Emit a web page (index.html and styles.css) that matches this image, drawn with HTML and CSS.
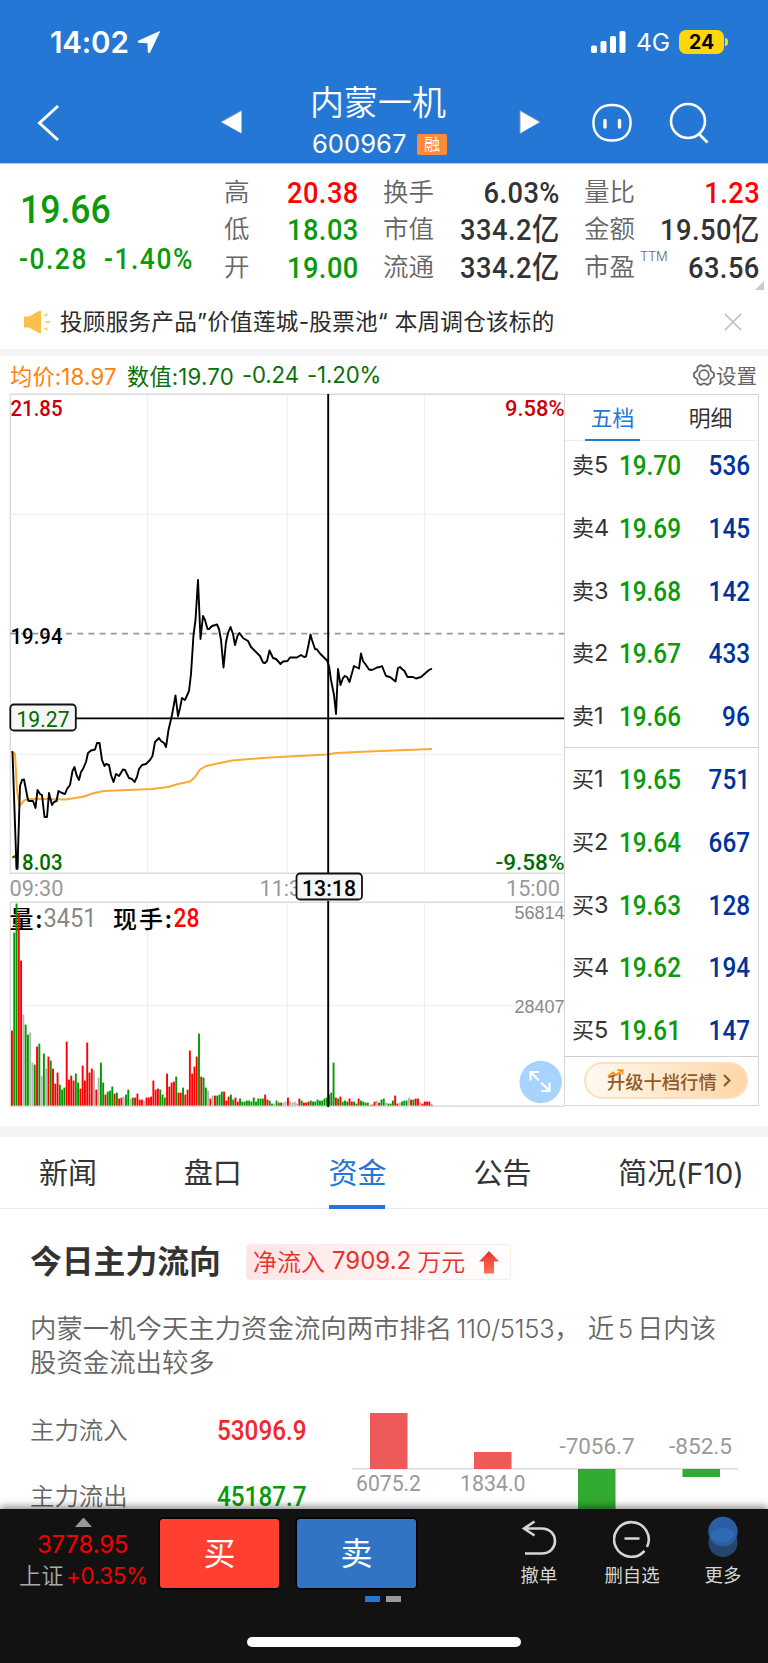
FILE: index.html
```html
<!DOCTYPE html>
<html lang="zh-CN">
<head>
<meta charset="utf-8">
<title>内蒙一机 600967</title>
<link rel="stylesheet" href="styles.css">
</head>
<body>
<div class="app">
  <header class="top">
    <div class="status">
      <div class="clock">14:02
        <svg width="24" height="24" viewBox="0 0 24 24"><path d="M22.3 1.200 1.600 10.400c-1.400.7-1 2.300.5 2.400l8.300.4.4 8.600c.1 1.400 1.800 1.800 2.400.4L22.900 1.900c.2-.5-.1-.9-.6-.7z" fill="#fff"/></svg>
      </div>
      <div class="signals">
        <svg width="35" height="22" viewBox="0 0 35 22" fill="#fff"><rect y="14.500" width="6" height="7.500" rx="1.800"/><rect x="9.500" y="10" width="6" height="12" rx="1.800"/><rect x="19" y="5" width="6" height="17" rx="1.800"/><rect x="28.500" width="6" height="22" rx="1.800"/></svg>
        <span class="net">4G</span>
        <span class="battery">24</span><i class="nub"></i>
      </div>
    </div>
    <div class="titlebar">
      <svg class="back" width="24" height="38" viewBox="0 0 24 38"><path d="M22 2 3.500 19 22 36" fill="none" stroke="#fff" stroke-width="3"/></svg>
      <svg class="prev" width="22" height="26" viewBox="0 0 22 26"><path d="M20.500 1.500v23L0 13z" fill="#fff"/><path d="M20.500 1.500 0 13" stroke="#8e99a6" stroke-width="1"/></svg>
      <div class="stock">
        <div class="name">内蒙一机</div>
        <div class="code">600967<span class="rong">融</span></div>
      </div>
      <svg class="next" width="22" height="26" viewBox="0 0 22 26"><path d="M1 1.500v23L21 13z" fill="#fff"/><path d="M1 24.500v-23L21 13" fill="none" stroke="#8e99a6" stroke-width="1"/></svg>
      <svg class="bot" width="42" height="40" viewBox="0 0 42 40" fill="none" stroke="#fff" stroke-width="2.400"><path d="M21 2c11.500 0 18.600 6.800 18.600 17.800S32.500 37.500 21 37.500 2.400 30.800 2.400 19.800 9.500 2 21 2z"/><path d="M14 17.500v6.500M28.500 17.500v6.500" stroke-width="3.400" stroke-linecap="round"/></svg>
      <svg class="search" width="42" height="42" viewBox="0 0 42 42" fill="none" stroke="#fff" stroke-width="2.600"><circle cx="19" cy="19" r="17"/><path d="m30 32 8.500 8.500"/></svg>
    </div>
  </header>

  <section class="quote">
    <div class="last">
      <div class="price din g">19.66</div>
      <div class="chg"><span class="din g">-0.28</span><span class="din g">-1.40%</span></div>
    </div>
    <dl class="col c1">
      <dt>高</dt><dd class="din r">20.38</dd>
      <dt>低</dt><dd class="din g">18.03</dd>
      <dt>开</dt><dd class="din g">19.00</dd>
    </dl>
    <dl class="col c2">
      <dt>换手</dt><dd class="din">6.03%</dd>
      <dt>市值</dt><dd class="din">334.2亿</dd>
      <dt>流通</dt><dd class="din">334.2亿</dd>
    </dl>
    <dl class="col c3">
      <dt>量比</dt><dd class="din r">1.23</dd>
      <dt>金额</dt><dd class="din">19.50亿</dd>
      <dt>市盈<sup>TTM</sup></dt><dd class="din">63.56</dd>
    </dl>
    <i class="corner"></i>
  </section>

  <section class="notice">
    <svg width="27" height="24" viewBox="0 0 27 24"><path d="M0 6.500h5L15.500.8c1-.5 1.500-.3 1.500.8v20.800c0 1.100-.5 1.300-1.500.8L5 17.500H0z" fill="#fdbf4b"/><path d="m20.500 6 3-2M21.500 12H26M20.500 18l3 2" stroke="#fdcb6e" stroke-width="2"/></svg>
    <p>投顾服务产品<span>”</span>价值莲城-股票池<span>“</span> 本周调仓该标的</p>
    <svg class="close" width="18" height="18" viewBox="0 0 18 18"><path d="m.8.8 16.400 16.400M17.200.8.8 17.200" stroke="#c4c4c4" stroke-width="1.700"/></svg>
  </section>

  <div class="band"></div>

  <section class="legend">
    <span class="avg">均价:18.97</span><span class="val">数值:19.70</span><span class="val">-0.24</span><span class="val">-1.20%</span>
    <div class="settings">
      <svg width="24" height="24" viewBox="0 0 24 24" fill="none" stroke="#666" stroke-width="1.800"><path d="M8.600 2.100 12 3.700l3.400-1.600 3 1.800.2 3.700 3.400 2.600v3.600l-3.400 2.600-.2 3.700-3 1.800L12 20.300l-3.400 1.600-3-1.800-.2-3.700L2 13.800v-3.600l3.400-2.600.2-3.700z" stroke-linejoin="round"/><circle cx="12" cy="12" r="4.800"/></svg>
      <span>设置</span>
    </div>
  </section>

  <section class="market">
    <svg class="chart" width="556" height="714" viewBox="9 393 556 714">
      <g fill="none" stroke="#f0f0f0" stroke-width="1.200">
        <path d="M147.500 394v479M287.300 394v479M424.500 394v479M10 514.300h554M10 754.500h554"/>
        <path d="M147.500 902v204M287.300 902v204M424.500 902v204M10 1005.500h554"/>
      </g>
      <path d="M564 394.200H10.300V873.200H564M10.300 902.200H564M10.300 902.200V1106.200H564" fill="none" stroke="#dcdcdc" stroke-width="1.400"/>
      <path d="M10 633.600H564" stroke="#999" stroke-width="1.700" stroke-dasharray="6 5.200"/>
      <g class="vlabel">
        <text x="9.500" y="928" textLength="33" class="cn">量:</text>
        <text x="43.500" y="927" textLength="53" lengthAdjust="spacingAndGlyphs" class="dn big" fill="#888">3451</text>
        <text x="113" y="928" textLength="59" class="cn">现手:</text>
        <text x="173.500" y="927" textLength="26" lengthAdjust="spacingAndGlyphs" class="dn big red" fill="#f00">28</text>
      </g>
      <g id="volume"></g>
      <text x="10.500" y="415.500" textLength="52" lengthAdjust="spacingAndGlyphs" class="dn" fill="#c8000a">21.85</text>
      <text x="505" y="415.500" textLength="59.500" lengthAdjust="spacingAndGlyphs" class="dn" fill="#c8000a">9.58%</text>
      <text x="10.500" y="643.500" textLength="52" lengthAdjust="spacingAndGlyphs" class="dn" fill="#000">19.94</text>
      <text x="10.500" y="870" textLength="52" lengthAdjust="spacingAndGlyphs" class="dn" fill="#006b00">18.03</text>
      <text x="495.500" y="870" textLength="69" lengthAdjust="spacingAndGlyphs" class="dn" fill="#006b00">-9.58%</text>
      <g fill="#999">
        <text x="9.500" y="896" textLength="54" lengthAdjust="spacingAndGlyphs" class="dn lt">09:30</text>
        <text x="259.500" y="896" textLength="54" lengthAdjust="spacingAndGlyphs" class="dn lt">11:30</text>
        <text x="506" y="896" textLength="54" lengthAdjust="spacingAndGlyphs" class="dn lt">15:00</text>
      </g>
      <text x="514.500" y="918.800" class="ax">56814</text>
      <text x="514.500" y="1012.700" class="ax">28407</text>
      <path d="M13 752 15 754 17 790 19.500 806 24 800.500 28 799 40 799 66 799.500 84 796.500 94 793 104 791 152 789 168 787 178 784 190 781.500 195 777 200 769.500 206 766 220 763 232 760.500 270 757.500 327 754.500 336 753 380 751 432 749" fill="none" stroke="#fba935" stroke-width="2" stroke-linejoin="round"/>
      <path d="M11.500 751.500 12.500 752 16.500 868 17.500 868 20 786 22 780 24 779.500 28 800 29 801 33 801 35.500 808 37.500 790 40 794 42 795 44.500 817 47 817 49 793 52 805 54 802 56.500 801 58.500 791 62 793 65 794 67 789 70 785 72.500 771 74.500 767 76.500 775 79 780 81 772 83 769 86 762 88 753 91 750.500 95 749.500 97 743 99.500 743 102 760 104.500 766 106 764 109 765 111 775 113.500 782 116 774 119 776 123 769.500 125 770 129 778 132 779 134.500 782 137 777 139 769 142 765 146 764 150 760 152.500 756 155 742 159 738 161 741 164 743 166 747 168.500 730 172 715 175.500 695.500 178 716 180 708 182 698 185 700 189 691 191 674 193.500 635 195.500 620 198 580 200.500 639 203 616 205 620 207.500 629 209 629 212 626 217 624.500 219 629 221 640 223.500 667.500 226 642 228 633 230.500 627 233 634 235 645 237.500 636 239.500 633 243 638 248 641 251 647 256 652 260 656 263 662.500 265 663 267 661 269.500 650.500 273 658 276 659 280.500 664 283 661.500 287.500 661 290 657.500 297 657.500 301 655 304 657 306 656.500 308.500 645 310.500 634.500 312 640 315 649 317 649.500 320 653.500 327 660.500 329 666 331 680 334 695 336 714 338 669 340.500 685 343 678 345 676 347 677 349.500 682 352 673 354 666 359 668.500 361 653.500 363 661 366 665 369 669.500 372 670 377 667.500 380 667 382 666 386 676 390 677 395.500 681.500 398 668 400 667 402 669 404.500 671 407.500 677 413 677 416 678.500 421 677 425 673.500 429 670 432 668.500" fill="none" stroke="#000" stroke-width="1.900" stroke-linejoin="round"/>
      <path d="M76 718.400H564M328.200 394V874M328.200 901V1107" stroke="#000" stroke-width="1.900"/>
      <g fill="#f6f6f6" stroke="#111" stroke-width="1.800"><rect x="10.300" y="704.500" width="65.500" height="26" rx="3.500"/><rect x="296.500" y="873.500" width="65.500" height="26" rx="3.500"/></g>
      <text x="16.500" y="727" textLength="53" lengthAdjust="spacingAndGlyphs" class="dn lt2" fill="#006b00">19.27</text>
      <text x="302" y="896" textLength="54" lengthAdjust="spacingAndGlyphs" class="dn" fill="#000">13:18</text>
      <circle cx="540.700" cy="1082" r="21.200" fill="#a8d3ff"/>
      <path d="M530.500 1080.500V1072H539M531 1072.500 539 1080.500M549.500 1082.500V1091H541M549 1090.500 541 1082.500" fill="none" stroke="#fff" stroke-width="2.200"/>
    </svg>

    <aside class="book">
      <div class="tabs"><span class="on">五档</span><span>明细</span></div>
      <div class="rows sell">
        <div class="row"><b>卖<i>5</i></b><span class="din g">19.70</span><em class="din">536</em></div>
        <div class="row"><b>卖<i>4</i></b><span class="din g">19.69</span><em class="din">145</em></div>
        <div class="row"><b>卖<i>3</i></b><span class="din g">19.68</span><em class="din">142</em></div>
        <div class="row"><b>卖<i>2</i></b><span class="din g">19.67</span><em class="din">433</em></div>
        <div class="row"><b>卖<i>1</i></b><span class="din g">19.66</span><em class="din">96</em></div>
      </div>
      <div class="rows buy">
        <div class="row"><b>买<i>1</i></b><span class="din g">19.65</span><em class="din">751</em></div>
        <div class="row"><b>买<i>2</i></b><span class="din g">19.64</span><em class="din">667</em></div>
        <div class="row"><b>买<i>3</i></b><span class="din g">19.63</span><em class="din">128</em></div>
        <div class="row"><b>买<i>4</i></b><span class="din g">19.62</span><em class="din">194</em></div>
        <div class="row"><b>买<i>5</i></b><span class="din g">19.61</span><em class="din">147</em></div>
      </div>
      <div class="upgrade">
        <div class="pill">升级十档行情
          <svg width="8" height="13" viewBox="0 0 8 13"><path d="m1 1 5.500 5.500L1 12" fill="none" stroke="#8f5a26" stroke-width="2.200"/></svg>
          <svg class="spark" width="18" height="9" viewBox="0 0 18 9"><path d="m1 7.500 5-4 3 2.500 6-4.500M10.500 1.200H15.500V5.500" fill="none" stroke="#f7941e" stroke-width="1.800"/></svg>
        </div>
      </div>
    </aside>
  </section>

  <div class="band tall"></div>

  <nav class="nav"><span>新闻</span><span>盘口</span><span class="on">资金</span><span>公告</span><span>简况<i>(F10)</i></span></nav>

  <section class="flow">
    <div class="flowhead">
      <h2>今日主力流向</h2>
      <div class="net-in"><span>净流入</span><i>7909.2</i><span>万元</span>
        <svg width="20" height="23" viewBox="0 0 20 23"><defs><linearGradient id="up" x2="0" y2="1"><stop stop-color="#e9302c"/><stop offset="1" stop-color="#ff7259"/></linearGradient></defs><path d="M10 0 20 10.500H15V22.500H5V10.500H0z" fill="url(#up)"/></svg>
      </div>
    </div>
    <p class="desc">内蒙一机今天主力资金流向两市排名<i>110/5153</i><span class="comma">，</span>近<i class="five">5</i>日内该<br>股资金流出较多</p>
    <div class="flowbody">
      <div class="sums">
        <div><span>主力流入</span><b class="din">53096.9</b></div>
        <div><span>主力流出</span><b class="din g">45187.7</b></div>
      </div>
      <svg class="bars" width="388" height="110" viewBox="351 1400 388 110">
        <path d="M352 1468.800H738" stroke="#dcdcdc" stroke-width="1.500"/>
        <path d="M370 1413h37.500v56H370zM474 1452h37.500v17H474z" fill="#ee5959"/>
        <path d="M578 1469h37.500v41H578zM682.500 1469H720v8H682.500z" fill="#32ab32"/>
        <g fill="#999">
          <text x="356" y="1491.300" textLength="65" lengthAdjust="spacingAndGlyphs" class="dn lt">6075.2</text>
          <text x="460" y="1491.300" textLength="65.500" lengthAdjust="spacingAndGlyphs" class="dn lt">1834.0</text>
          <text x="559.500" y="1454" textLength="75" lengthAdjust="spacingAndGlyphs" class="dn lt">-7056.7</text>
          <text x="669" y="1454" textLength="63" lengthAdjust="spacingAndGlyphs" class="dn lt">-852.5</text>
        </g>
      </svg>
    </div>
  </section>

  <footer class="dock">
    <div class="dockrow">
      <div class="index">
        <i class="tri"></i>
        <div class="pts">3778.95</div>
        <div class="pct"><span>上证</span>+0.35%</div>
      </div>
      <div class="btn buybtn">买</div>
      <div class="btn sellbtn">卖</div>
      <div class="tool t1">
        <svg width="36" height="38" viewBox="0 0 36 38" fill="none" stroke="#d5d5d5" stroke-width="2.600"><path d="M13.500 1.500 3 8.500 13.500 15.500M3 8.500H20.500c18 0 18 25 0 25H4"/></svg>
        <span>撤单</span>
      </div>
      <div class="tool t2">
        <svg width="38" height="38" viewBox="0 0 38 38" fill="none" stroke="#d5d5d5" stroke-width="2.600"><path d="M34 27A17.300 17.300 0 1 0 31.500 30.800M11.500 18.500h15"/></svg>
        <span>删自选</span>
      </div>
      <div class="tool t3">
        <svg width="32" height="42" viewBox="0 0 32 42"><circle cx="16" cy="26.500" r="14.500" fill="#24466e"/><circle cx="16" cy="15.500" r="14.700" fill="#2a5fa3"/><path d="M4 18a14.500 14.500 0 0 1 24 0 14.700 14.700 0 0 1-24 4z" fill="#2e6bb4"/></svg>
        <span>更多</span>
      </div>
    </div>
    <div class="pager"><i></i><i></i></div>
    <div class="home"></div>
  </footer>
</div>
<script src="chart.js"></script>
</body>
</html>
```
FILE: styles.css
```css
* { box-sizing: border-box; }
body, h2, p, dl, dd, dt { margin: 0; }
i, em { font-style: normal; }
body {
  width: 768px;
  background: #fff;
  color: #333;
  font-family: Inter, "Noto Sans CJK SC", sans-serif;
}
svg { display: block; flex: none; }
.app { width: 768px; height: 1663px; overflow: hidden; display: flex; flex-direction: column; }
.app > * { flex: none; }

/* condensed numerals */
.din {
  display: inline-block;
  font-family: Roboto, "Noto Sans CJK SC", sans-serif;
  font-weight: 500;
  transform: scaleX(.9);
  transform-origin: left center;
  white-space: nowrap;
}
.g { color: #0a9a0a; }
.r { color: #f00; }

/* header */
.top { height: 164px; background: #2577d5; color: #fff; border-bottom: 1px solid #a9caef; }
.status { height: 80px; padding: 4px 40px 0 50px; display: flex; justify-content: space-between; align-items: center; }
.clock { display: flex; align-items: center; gap: 8px; font-size: 29.600px; font-weight: 600; letter-spacing: -.2px; }
.signals { display: flex; align-items: center; }
.net { margin-left: 10px; font-size: 24.500px; width: 43px; }
.battery { width: 45px; height: 24px; border-radius: 7px; background: #ffd60a; color: #000; font-size: 19.500px; line-height: 24px; font-weight: 700; text-align: center; }
.nub { width: 3px; height: 8px; margin-left: 1px; border-radius: 0 3px 3px 0; background: #ffd60a; }
.titlebar { height: 83px; display: flex; align-items: flex-start; }
.titlebar > * { flex: none; }
.back { margin: 24px 0 0 36px; }
.prev { margin: 29px 0 0 161px; }
.stock { width: 158px; margin: -1px 0 0 56px; }
.name { padding-left: 11px; font-size: 34px; line-height: 48px; font-weight: 350; white-space: nowrap; }
.code { margin-top: 2px; padding-left: 13px; display: flex; align-items: center; font-size: 25.600px; line-height: 30px; font-weight: 400; }
.rong { width: 30px; height: 21px; margin-left: auto; margin-right: 10px; border-radius: 2px; background: #ff8a3c; font-size: 16px; line-height: 21px; text-align: center; }
.next { margin: 29px 0 0 62px; }
.bot { margin: 23px 0 0 50px; }
.search { margin: 22px 0 0 36px; }

/* quote grid */
.quote { height: 130px; padding: 10px 9px 0 22px; display: flex; position: relative; }
.last { width: 202px; flex: none; }
.price { display: block; font-size: 39.500px; line-height: 46px; margin: 13px 0 0 -2px; }
.chg { display: flex; gap: 8px; margin: 7px 0 0 -3px; font-size: 29.300px; line-height: 38px; letter-spacing: 1.700px; }
.col { display: grid; grid-template-columns: 51px 1fr; grid-auto-rows: 37.300px; line-height: 37px; flex: none; }
.col dt { color: #666; font-size: 25.500px; white-space: nowrap; line-height: 35px; font-weight: 350; }
.col dd { justify-self: end; transform-origin: right center; font-size: 30.300px; letter-spacing: .5px; margin-right: -1px; }
.c1 { width: 134px; }
.c2 { width: 176px; margin-left: 25px; }
.c3 { width: 175px; margin-left: 25px; }
.col sup { font-size: 13px; line-height: 0; margin-left: 5px; vertical-align: 15px; letter-spacing: -.3px; }
.corner { position: absolute; right: 4px; bottom: 4px; border-left: 9px solid transparent; border-bottom: 9px solid #c9c9c9; }

/* notice */
.notice { height: 55px; padding: 0 26px 0 24px; display: flex; align-items: center; }
.notice p { margin-left: 9px; font-size: 22.600px; line-height: 30px; white-space: pre; color: #2b2b2b; letter-spacing: .25px; }
.close { margin-left: auto; }
.band { height: 7px; background: #f4f4f4; }
.band.tall { height: 11px; margin-top: 19px; }

/* chart legend */
.legend { height: 37px; padding: 0 11px 0 10px; display: flex; align-items: center; font-size: 22.200px; white-space: nowrap; letter-spacing: .2px; }
.avg { color: #ff8010; width: 117px; font-weight: 400; }
.val { color: #0a6e0a; margin-right: 8px; }
.val + .val { letter-spacing: -.1px; }
.settings { margin-left: auto; display: flex; align-items: center; color: #666; font-size: 20.500px; letter-spacing: 0; }

/* chart and order book */
.market { height: 714px; padding-left: 9px; display: flex; align-items: flex-start; }
.chart { overflow: visible; margin-right: -1px; }
.dn { font: 500 22px Roboto, sans-serif; }
.dn.big { font-size: 25px; font-weight: 400; }
.dn.red { font-weight: 500; }
.dn.lt { font-weight: 400; }
.dn.lt2 { font-size: 22.500px; font-weight: 400; }
.cn { font: 500 24px "Noto Sans CJK SC", sans-serif; fill: #000; }
.ax { font: 18px "Liberation Sans", sans-serif; fill: #888; }
.book { width: 195px; height: 712px; border: 1.500px solid #d6d6d6; margin-top: 1px; background: #fff; }
.tabs { height: 46px; padding: 0 20px; display: flex; justify-content: space-between; font-size: 21.800px; line-height: 47px; border-bottom: 1px solid #eee; }
.tabs span { width: 55px; text-align: center; }
.tabs .on { height: 46px; color: #2577d5; border-bottom: 2px solid #2577d5; }
.rows { display: flex; flex-direction: column; gap: 14.800px; }
.sell { height: 307px; border-bottom: 1px solid #d6d6d6; }
.buy { height: 309px; padding-top: 7px; border-bottom: 1.500px solid #d0d0d0; }
.row { height: 48px; flex: none; display: flex; align-items: center; padding: 0 8px 0 7px; }
.row b { width: 47px; font-weight: 400; font-size: 22px; line-height: 48px; white-space: nowrap; }
.row b i { font-size: 23.500px; }
.row .din { font-size: 27px; line-height: 48px; padding-top: 2px; }
.row em { margin-left: auto; color: #003399; transform-origin: right center; }
.upgrade { padding: 5px 10px 0 19px; }
.pill { position: relative; height: 37px; display: flex; align-items: center; gap: 6px; padding-left: 21px; border-radius: 19px; border: 2px solid #fce0bd; background: linear-gradient(100deg, #fffaf3, #fdd6a4); color: #8f5a26; font-size: 18.300px; font-weight: 500; white-space: nowrap; }
.spark { position: absolute; left: 21px; top: 5px; }

/* section tabs */
.nav { height: 72px; padding-left: 39px; display: flex; align-items: flex-start; font-size: 29px; border-bottom: 1px solid #e8e8e8; line-height: 74px; }
.nav span { width: 56px; height: 72px; margin-right: 88.800px; white-space: nowrap; }
.nav i { font-size: 29px; letter-spacing: -.2px; }
.nav .on { color: #2577d5; border-bottom: 4px solid #2577d5; }

/* money flow */
.flow { height: 300px; padding: 35px 0 0 30px; overflow: hidden; }
.flowhead { display: flex; align-items: center; height: 36px; }
h2 { width: 216px; font-size: 31.800px; font-weight: 600; line-height: 36px; }
.net-in { width: 265px; height: 36px; padding: 0 11px 3px 6px; display: flex; align-items: center; font-size: 24px; font-weight: 350; color: #e9302c; background: linear-gradient(90deg, #ffe4e4, #fff); border: 1px solid #fdeaea; border-radius: 3px; white-space: nowrap; }
.net-in i { font-weight: 400; margin: 0 6px 0 7px; font-size: 24px; }
.net-in svg { margin-left: auto; margin-top: 3px; }
.desc { margin-top: 32px; font-size: 26.400px; line-height: 33.500px; color: #666; font-weight: 350; white-space: nowrap; }
.desc i { margin-left: 4px; font-size: 25.500px; letter-spacing: -.3px; }
.desc .comma { margin-right: 7px; }
.desc .five { margin: 0 4px; }
.flowbody { display: flex; margin-top: 21px; }
.sums { width: 321px; padding-top: 12px; }
.sums div { height: 65.500px; display: flex; align-items: flex-start; line-height: 36px; }
.sums span { width: 187px; font-size: 24.400px; color: #666; font-weight: 350; }
.sums b { font-size: 27px; line-height: 39px; color: #f0282d; }
.sums b.g { color: #0a9a0a; }

/* bottom dock */
.dock { height: 155px; background: #121212; box-shadow: 0 -2px 8px rgba(0,0,0,.5); position: relative; border-bottom: 1px solid #ddd; }
.dockrow { height: 79px; display: flex; align-items: flex-start; color: #d5d5d5; }
.index { width: 160px; padding: 9px 0 0 19px; }
.tri { display: block; width: 17px; margin-left: 56px; border: solid transparent; border-width: 0 8.500px 9px; border-bottom-color: #999; }
.pts { margin: 4px 0 0 18px; font-size: 24px; line-height: 28px; color: #f40000; letter-spacing: -.2px; }
.pct { display: flex; align-items: center; margin-top: 2px; font-size: 22.300px; line-height: 30px; color: #f40000; white-space: nowrap; letter-spacing: -.3px; }
.pct span { width: 47px; color: #aaa; font-weight: 350; letter-spacing: 0; }
.btn { width: 119px; height: 69px; margin-top: 10px; border-radius: 3px; color: #fff; font-size: 32px; line-height: 69px; text-align: center; box-shadow: 0 0 0 1.500px #000; }
.buybtn { background: #ff4030; }
.sellbtn { margin-left: 18px; background: #3174c4; }
.tool { display: flex; flex-direction: column; align-items: center; font-size: 18.400px; line-height: 24px; white-space: nowrap; }
.tool svg { margin-top: 11px; margin-bottom: 5px; }
.t1 { width: 60px; margin-left: 93px; }
.t2 { width: 60px; margin-left: 33px; }
.t3 { width: 60px; margin-left: 31px; }
.t3 svg { margin-top: 7px; margin-bottom: 5px; }
.pager { height: 13px; padding: 8px 0 0 365px; display: flex; gap: 6px; }
.pager i { width: 15px; height: 6px; background: #2577d5; }
.pager i + i { background: #999; }
.home { width: 274px; height: 10px; margin: 36px 0 0 247px; border-radius: 5px; background: #fff; }
```
FILE: chart.js
```js
// One entry per minute: colour code and bar height in pixels.
const minutes = `R75 G173 G202 R193 R145 N91 G81 G71 N73 N43 G41 R59 G62 N30 G52 N37 R49 G45 R37 R22
R33 G21 G16 G18 R64 R26 R30 R25 G32 G23 R17 R40 R25 R63 R33 R37 N35 R16 N28 G43
G23 R11 G14 G15 G19 R12 G13 R7 R8 N9 G11 G16 N7 G8 R8 R12 R6 R6 N5 R8
R8 R9 R25 R16 R17 G16 G11 G8 R32 R19 R23 R24 G29 R13 R13 G18 R11 R16 R55 R32
R39 R49 G72 R29 G28 G18 N15 R7 N10 R10 G10 G11 G14 R14 R5 R9 G11 G6 R8 R4
G7 G4 G4 G5 G5 G4 G8 G4 G7 G7 G7 R11 R6 G5 G2 N2 G5 G3 R3 N3
N4 R8 N4 N3 N4 N2 R7 G5 R3 R3 R4 G5 G4 G4 G6 G5 G5 G7 G8 G11
G13 G43 R8 G7 R9 G4 G5 G4 R7 R4 G4 G2 R7 G5 G4 G3 G3 N1 R1 R4
N5 R3 G6 G7 N3 G2 G2 G5 R10 R2 N3 G4 G5 G5 N8 R6 G6 R7 R7 N4
R2 R4 R4 R4 R1`.split(/\s+/);
const colors = { R: "#ff0000", G: "#009a00", N: "#b4b4b4" };
const group = document.getElementById("volume");
minutes.forEach((m, i) => {
  const h = Number(m.slice(1));
  const bar = document.createElementNS("http://www.w3.org/2000/svg", "rect");
  bar.setAttribute("x", (11 + i * 2.281).toFixed(2));
  bar.setAttribute("y", 1105.600 - h);
  bar.setAttribute("width", 1.900);
  bar.setAttribute("height", h);
  bar.setAttribute("fill", colors[m[0]]);
  group.appendChild(bar);
});
```
